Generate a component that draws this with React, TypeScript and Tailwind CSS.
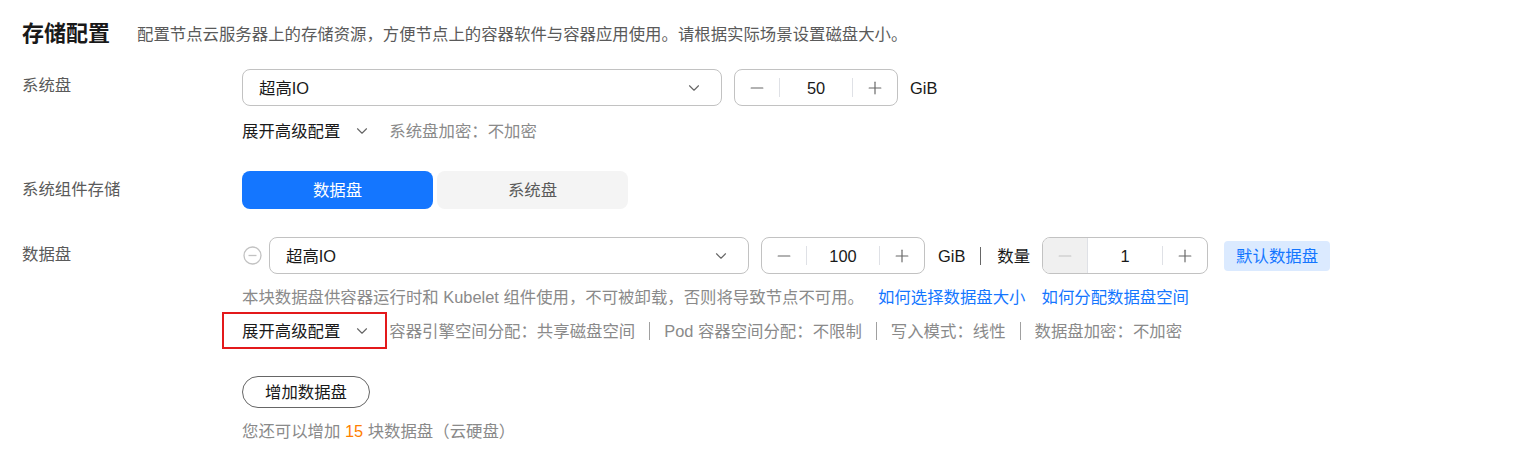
import { ChevronDown, Minus, Plus } from "lucide-react";

const font = { fontFamily: "'Liberation Sans', 'Noto Sans CJK SC', sans-serif" };

function Select({ value }: { value: string }) {
  return (
    <div className="flex h-[37px] w-[480px] items-center justify-between rounded-[8px] border border-[#c2c2c2] bg-white pl-[16px] pr-[18px] text-[#191919]">
      <span>{value}</span>
      <ChevronDown className="h-[18px] w-[18px] text-[#666]" strokeWidth={1.5} />
    </div>
  );
}

function Stepper({ value, width, minusDisabled }: { value: string; width: string; minusDisabled?: boolean }) {
  return (
    <div className={`flex h-[37px] ${width} items-stretch overflow-hidden rounded-[8px] border border-[#c2c2c2] bg-white`}>
      {minusDisabled ? (
        <div className="flex w-[45px] items-center justify-center border-r border-[#dfe1e6] bg-[#f0f0f0]">
          <Minus className="h-[20px] w-[20px] text-[#c2c2c2]" strokeWidth={1.4} />
        </div>
      ) : (
        <div className="flex w-[44px] items-center justify-center">
          <Minus className="h-[20px] w-[20px] text-[#666]" strokeWidth={1.4} />
        </div>
      )}
      {!minusDisabled && <div className="my-[8px] w-px bg-[#dfe1e6]" />}
      <div className="flex flex-1 items-center justify-center text-[#191919]">{value}</div>
      <div className="my-[8px] w-px bg-[#dfe1e6]" />
      <div className="flex w-[44px] items-center justify-center">
        <Plus className="h-[20px] w-[20px] text-[#666]" strokeWidth={1.4} />
      </div>
    </div>
  );
}

function Sep() {
  return <span className="mx-[14px] inline-block h-[18px] w-px bg-[#a0a0a0]" />;
}

export default function App() {
  return (
    <div className="min-h-[463px] bg-white pl-[22px] text-[16.4px] leading-[22px]" style={font}>
      <div className="flex items-center pt-[19px]">
        <h1 className="text-[22px] font-bold leading-[30px] text-[#191919]">存储配置</h1>
        <p className="ml-[27px] text-[#5a5a5a]">配置节点云服务器上的存储资源，方便节点上的容器软件与容器应用使用。请根据实际场景设置磁盘大小。</p>
      </div>

      <div className="mt-[20px] flex">
        <div className="w-[220px] pt-[5px] text-[#5a5a5a]">系统盘</div>
        <div>
          <div className="flex items-center">
            <Select value="超高IO" />
            <div className="ml-[12px]">
              <Stepper value="50" width="w-[164px]" />
            </div>
            <span className="ml-[12px] text-[#191919]">GiB</span>
          </div>
          <div className="mt-[14px] flex items-center">
            <span className="text-[#191919]">展开高级配置</span>
            <ChevronDown className="ml-[13px] h-[18px] w-[18px] text-[#666]" strokeWidth={1.5} />
            <span className="ml-[18px] text-[#8a8a8a]">系统盘加密：不加密</span>
          </div>
        </div>
      </div>

      <div className="mt-[29px] flex">
        <div className="w-[220px] pt-[7px] text-[#5a5a5a]">系统组件存储</div>
        <div className="flex gap-[4px]">
          <button className="h-[38px] w-[191px] rounded-[8px] bg-[#1476ff] text-white">数据盘</button>
          <button className="h-[38px] w-[191px] rounded-[8px] bg-[#f4f4f4] text-[#5a5a5a]">系统盘</button>
        </div>
      </div>

      <div className="mt-[28px] flex">
        <div className="w-[220px] pt-[6px] text-[#5a5a5a]">数据盘</div>
        <div>
          <div className="flex items-center">
            <svg width="19" height="19" viewBox="0 0 19 19" className="ml-[1px] mr-[7px]">
              <circle cx="9.5" cy="9.5" r="8.5" fill="none" stroke="#c2c2c2" strokeWidth="1.3" />
              <line x1="5.5" y1="9.5" x2="13.5" y2="9.5" stroke="#c2c2c2" strokeWidth="1.3" />
            </svg>
            <Select value="超高IO" />
            <div className="ml-[12px]">
              <Stepper value="100" width="w-[164px]" />
            </div>
            <span className="ml-[13px] text-[#191919]">GiB</span>
            <span className="ml-[15px] inline-block h-[18px] w-px bg-[#666]" />
            <span className="ml-[16px] text-[#191919]">数量</span>
            <div className="ml-[12px]">
              <Stepper value="1" width="w-[166px]" minusDisabled />
            </div>
            <span className="ml-[16px] flex h-[30px] items-center rounded-[4px] bg-[#dbeaff] px-[12px] text-[#1476ff]">默认数据盘</span>
          </div>
          <div className="mt-[12px] flex text-[#8a8a8a]">
            <span>本块数据盘供容器运行时和 Kubelet 组件使用，不可被卸载，否则将导致节点不可用。</span>
            <a className="ml-[14px] text-[#1476ff]">如何选择数据盘大小</a>
            <a className="ml-[16px] text-[#1476ff]">如何分配数据盘空间</a>
          </div>
          <div className="relative mt-[4px] flex h-[37px] items-center">
            <div className="absolute inset-y-0 left-[-20px] w-[165px] border-2 border-[#e3191b]" />
            <span className="text-[#191919]">展开高级配置</span>
            <ChevronDown className="ml-[13px] h-[18px] w-[18px] text-[#666]" strokeWidth={1.5} />
            <span className="ml-[18px] flex items-center text-[#8a8a8a]">
              容器引擎空间分配：共享磁盘空间
              <Sep />
              Pod 容器空间分配：不限制
              <Sep />
              写入模式：线性
              <Sep />
              数据盘加密：不加密
            </span>
          </div>
          <button className="mt-[27px] h-[32px] w-[128px] rounded-full border border-[#666] text-[#191919]">增加数据盘</button>
          <p className="mt-[12px] text-[#8a8a8a]">
            您还可以增加 <span className="text-[#ff7f00]">15</span> 块数据盘（云硬盘）
          </p>
        </div>
      </div>
    </div>
  );
}
